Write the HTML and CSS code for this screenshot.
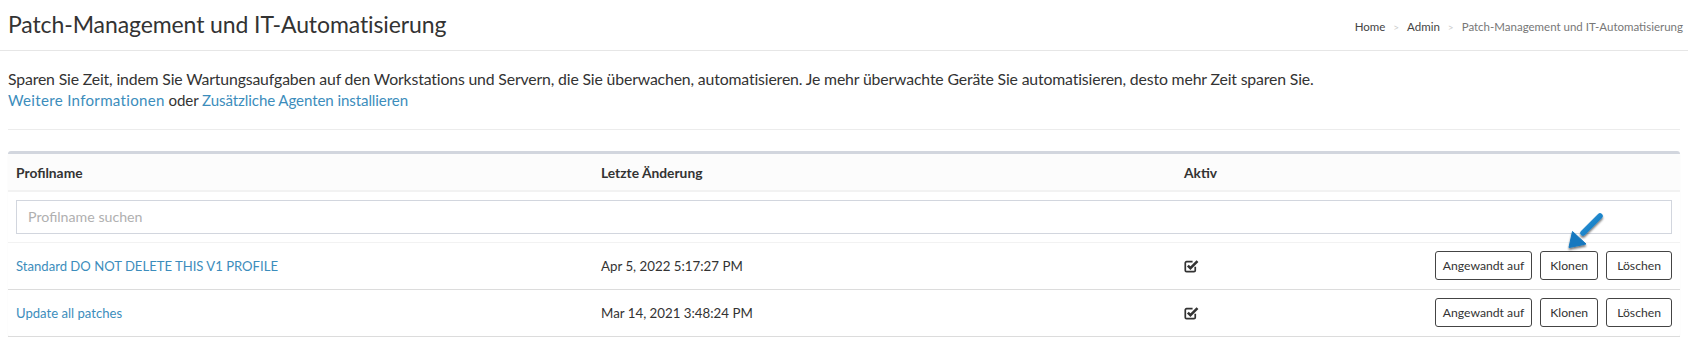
FILE: index.html
```html
<!DOCTYPE html>
<html lang="de">
<head>
<meta charset="utf-8">
<title>Patch-Management und IT-Automatisierung</title>
<link rel="stylesheet" href="styles.css">
</head>
<body>
<header class="page-header">
  <h1 class="title">Patch-Management und IT-Automatisierung</h1>
  <ol class="breadcrumb">
    <li><a href="#">Home</a></li>
    <li class="sep">&gt;</li>
    <li><a href="#">Admin</a></li>
    <li class="sep">&gt;</li>
    <li class="active">Patch-Management und IT-Automatisierung</li>
  </ol>
</header>
<main class="content">
  <p class="intro">Sparen Sie Zeit, indem Sie Wartungsaufgaben auf den Workstations und Servern, die Sie überwachen, automatisieren. Je mehr überwachte Geräte Sie automatisieren, desto mehr Zeit sparen Sie.<br><span class="more"><a href="#" class="more-info">Weitere Informationen</a> oder <a href="#">Zusätzliche Agenten installieren</a></span></p>
  <hr class="divider">
  <section class="box">
    <table class="profiles">
      <colgroup>
        <col class="c1"><col class="c2"><col class="c3"><col class="c4">
      </colgroup>
      <thead>
        <tr>
          <th>Profilname</th>
          <th>Letzte Änderung</th>
          <th>Aktiv</th>
          <th></th>
        </tr>
      </thead>
      <tbody>
        <tr class="search-row">
          <td colspan="4"><input class="search" type="text" placeholder="Profilname suchen"></td>
        </tr>
        <tr class="data-row">
          <td><a href="#">Standard DO NOT DELETE THIS V1 PROFILE</a></td>
          <td>Apr 5, 2022 5:17:27 PM</td>
          <td><svg class="check" width="15" height="14" viewBox="0 0 14 13"><path d="M10.5 7.2V10.6a1.2 1.2 0 0 1-1.2 1.2H2.4a1.2 1.2 0 0 1-1.2-1.2V3.7a1.2 1.2 0 0 1 1.2-1.2H8" fill="none" stroke="#333" stroke-width="1.6"/><path d="M3.6 6.2L6 8.6L12.6 2" fill="none" stroke="#333" stroke-width="2.4"/></svg></td>
          <td class="actions"><button class="btn narrow">Angewandt auf</button><button class="btn">Klonen</button><button class="btn wide">Löschen</button></td>
        </tr>
        <tr class="data-row">
          <td><a href="#">Update all patches</a></td>
          <td>Mar 14, 2021 3:48:24 PM</td>
          <td><svg class="check" width="15" height="14" viewBox="0 0 14 13"><path d="M10.5 7.2V10.6a1.2 1.2 0 0 1-1.2 1.2H2.4a1.2 1.2 0 0 1-1.2-1.2V3.7a1.2 1.2 0 0 1 1.2-1.2H8" fill="none" stroke="#333" stroke-width="1.6"/><path d="M3.6 6.2L6 8.6L12.6 2" fill="none" stroke="#333" stroke-width="2.4"/></svg></td>
          <td class="actions"><button class="btn narrow">Angewandt auf</button><button class="btn">Klonen</button><button class="btn wide">Löschen</button></td>
        </tr>
      </tbody>
    </table>
  </section>
</main>
<svg class="arrow" width="50" height="48" viewBox="0 0 50 48">
  <defs>
    <filter id="sh" x="-30%" y="-30%" width="160%" height="160%">
      <feGaussianBlur in="SourceAlpha" stdDeviation="1.2"/>
      <feOffset dx="0" dy="1.5" result="b"/>
      <feComponentTransfer><feFuncA type="linear" slope="0.55"/></feComponentTransfer>
      <feMerge><feMergeNode/><feMergeNode in="SourceGraphic"/></feMerge>
    </filter>
    <linearGradient id="ag" x1="0" y1="0" x2="1" y2="1">
      <stop offset="0" stop-color="#2a95d8"/>
      <stop offset="1" stop-color="#1276bd"/>
    </linearGradient>
  </defs>
  <g filter="url(#sh)">
    <path d="M40 9L23 26" stroke="url(#ag)" stroke-width="5.5" stroke-linecap="round" fill="none"/>
    <path d="M12.5 24.5L26 37L9 40.5Z" fill="#1478bf" stroke="#1478bf" stroke-width="1" stroke-linejoin="round"/>
  </g>
</svg>
</body>
</html>
```

FILE: styles.css
```css
* { box-sizing: border-box; }

body {
  margin: 0;
  font-family: Lato, "Liberation Sans", sans-serif;
  font-size: 14px;
  color: #333;
  background: #fff;
  position: relative;
}

a { color: #3c8dbc; text-decoration: none; }

.page-header {
  display: flex;
  justify-content: space-between;
  align-items: center;
  height: 51px;
  padding: 0 5px 2px 8px;
  border-bottom: 1px solid #e6e6e6;
}

.title {
  margin: 0;
  font-size: 23px;
  font-weight: 400;
  color: #333;
  letter-spacing: -0.1px;
}

.breadcrumb {
  list-style: none;
  margin: 4px 0 0;
  padding: 0;
  display: flex;
  gap: 8px;
  font-size: 11.5px;
}
.breadcrumb a { color: #444; }
.breadcrumb .sep { color: #ccc; font-size: 10px; padding-top: 1px; }
.breadcrumb .active { color: #777; }

.content {
  padding: 0 8px;
}

.intro {
  margin: 18px 0 0;
  font-size: 15.8px;
  line-height: 20.5px;
  letter-spacing: -0.15px;
}
.more { font-size: 15.1px; letter-spacing: -0.1px; }
.more-info { letter-spacing: 0.3px; }

.divider {
  margin: 19px 0 0;
  border: 0;
  border-top: 1px solid #ececec;
}

.box {
  margin-top: 21px;
  border-top: 3px solid #d2d6de;
  border-radius: 3px;
  box-shadow: 0 1px 1px rgba(0,0,0,0.08);
}

.profiles {
  width: 100%;
  border-collapse: collapse;
  table-layout: fixed;
}
.c1 { width: 585px; }
.c2 { width: 583px; }
.c3 { width: 200px; }

.profiles th {
  text-align: left;
  font-weight: 700;
  font-size: 13.8px;
  padding: 0 8px;
  height: 37px;
  background: #fcfcfc;
  border-bottom: 2px solid #f2f2f2;
}

.profiles td {
  padding: 0 8px;
  font-size: 13.3px;
  vertical-align: middle;
}

.search-row td {
  height: 51px;
  border-bottom: 1px solid #f2f2f2;
}

.search {
  display: block;
  width: 100%;
  height: 34px;
  border: 1px solid #d2d6de;
  padding: 0 11px;
  font-family: Lato, "Liberation Sans", sans-serif;
  font-size: 14.2px;
  color: #333;
  outline: none;
}
.search::placeholder { color: #b0b0b0; }

.data-row td {
  height: 47px;
  border-bottom: 1px solid #dcdcdc;
}
.data-row td:first-child { font-size: 13.1px; }

.check { display: block; margin-left: 0; }

.actions {
  display: flex;
  justify-content: flex-end;
  align-items: center;
  gap: 8px;
}

.btn {
  font-family: Lato, "Liberation Sans", sans-serif;
  font-size: 12.2px;
  color: #333;
  background: #fff;
  border: 1px solid #444;
  border-radius: 3px;
  height: 29px;
  padding: 0 9px;
}
.btn.narrow { padding: 0 7px; }
.btn.wide { padding: 0 10px; }

.arrow {
  position: absolute;
  left: 1560px;
  top: 207px;
}
```
